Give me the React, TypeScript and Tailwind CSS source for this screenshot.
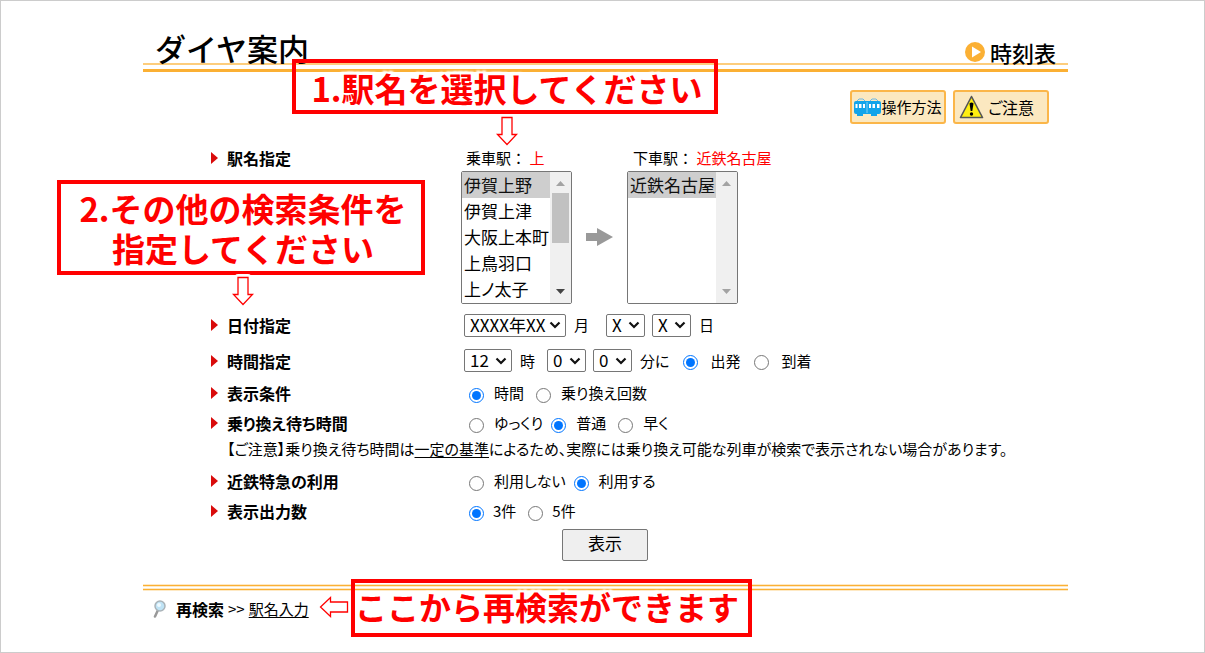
import React, { useState } from 'react';

const stations = ['伊賀上野', '伊賀上津', '大阪上本町', '上鳥羽口', '上ノ太子'];

const callout =
  'absolute whitespace-nowrap border-4 border-[#f00] font-bold text-[#f00] [font-feature-settings:normal] [text-shadow:0_0_2px_#fff,2px_0_1px_#fff,-2px_0_1px_#fff,0_2px_1px_#fff,0_-2px_1px_#fff,3px_3px_2px_#fff,-3px_-3px_2px_#fff,3px_-3px_2px_#fff,-3px_3px_2px_#fff]';

const Dropdown = ({ label, value, width }: { label: string; value: string; width: string }) => (
  <span className={`inline-grid items-center ${width}`}>
    <select
      aria-label={label}
      className="col-start-1 row-start-1 h-[23px] w-full appearance-none rounded-[2px] border border-[#767676] bg-white pb-[2px] pl-[5px] text-[17px] leading-5"
    >
      <option>{value}</option>
    </select>
    <svg viewBox="0 0 12 8" className="pointer-events-none col-start-1 row-start-1 mr-[5px] h-2 w-3 justify-self-end">
      <path d="M1.5 1.5L6 6L10.5 1.5" fill="none" stroke="#111" strokeWidth="2.2" />
    </svg>
  </span>
);

type Option = { text: string; gap: string };

const RadioGroup = ({ name, options, initial }: { name: string; options: Option[]; initial: string }) => {
  const [value, setValue] = useState(initial);
  return (
    <>
      {options.map((o) => (
        <label key={o.text} className={`flex items-center ${o.gap}`}>
          <input
            type="radio"
            name={name}
            checked={value === o.text}
            onChange={() => setValue(o.text)}
            className="mt-1 h-[15px] w-[15px] accent-[#0075ff]"
          />
          {o.text}
        </label>
      ))}
    </>
  );
};

const Heading = ({ title }: { title: string }) => (
  <h2 className="flex w-[254px] shrink-0 items-center gap-[9px] text-[16px] font-bold leading-5">
    <svg viewBox="0 0 8 12" className="h-3 w-2">
      <path d="M1 0L8 6L1 12Z" fill="#d90b0b" />
    </svg>
    {title}
  </h2>
);

const Row = ({ title, height, children }: { title: string; height: string; children: React.ReactNode }) => (
  <div className={`flex items-center ${height}`}>
    <Heading title={title} />
    <div className="flex items-center">{children}</div>
  </div>
);

const ListBox = ({ label, items, active }: { label: string; items: string[]; active: boolean }) => (
  <div className="flex h-[133px] w-[111px] overflow-hidden rounded-[2px] border border-[#767676]">
    <select
      size={5}
      aria-label={label}
      defaultValue={items[0]}
      className="h-full w-[88px] overflow-hidden bg-white p-0 text-[17px] [scrollbar-width:none]"
    >
      {items.map((s) => (
        <option key={s} value={s} className="h-[26px] p-0 pl-[2px] leading-[22px] checked:bg-[#cecece]">
          {s}
        </option>
      ))}
    </select>
    <div aria-hidden="true" className="flex flex-1 flex-col items-center bg-[#f0f0f0] py-[9px]">
      <svg viewBox="0 0 9 5" className="h-[5px] w-[9px]">
        <path d="M0 5L4.500 0L9 5Z" fill="#a3a3a3" />
      </svg>
      <div className={active ? 'mt-[7px] h-[50px] w-[17px] bg-[#c1c1c1]' : ''} />
      <svg viewBox="0 0 9 5" className="mt-auto h-[5px] w-[9px]">
        <path d="M0 0L4.500 5L9 0Z" fill={active ? '#444' : '#a3a3a3'} />
      </svg>
    </div>
  </div>
);

const Arrow = ({ className }: { className: string }) => (
  <svg viewBox="0 0 22 30" className={`absolute h-[30px] w-[22px] overflow-visible ${className}`}>
    <path
      d="M6 1.500H16V18.500H20.500L11 28.500L1.500 18.500H6Z"
      fill="#fff"
      stroke="#fff"
      strokeWidth="7"
      strokeLinejoin="round"
    />
    <path d="M6 1.500H16V18.500H20.500L11 28.500L1.500 18.500H6Z" fill="#fff" stroke="#f00" strokeWidth="1.300" />
  </svg>
);

const TrainIcon = () => (
  <svg viewBox="0 0 27 19" className="h-[19px] w-[27px]">
    <path d="M3 3L5 1H9L11 3M16 3L18 1H22L24 3" fill="none" stroke="#6cb8e6" strokeWidth="1" />
    <rect x="0" y="3" width="27" height="13" rx="2" fill="#12a4ea" />
    <path d="M1.500 6h2v4h-2zM5 6h2.500v4H5zM9 6h2v4H9zM15 6h2v4h-2zM18.500 6H21v4h-2.500zM23 6h2.500v4H23z" fill="#fff" />
    <path d="M13 4V15" stroke="#7fd0f7" strokeWidth="1" />
    <path d="M3 16h6v2H3zM17 16h6v2h-6z" fill="#12a4ea" />
  </svg>
);

const WarningIcon = () => (
  <svg viewBox="0 0 25 24" className="h-6 w-[25px]">
    <path d="M12.500 1.500L23.500 22.500H1.500Z" fill="#ffee10" stroke="#555" strokeWidth="1.600" strokeLinejoin="round" />
    <path d="M10.500 8.500Q12.500 6.500 14.500 8.500L13.300 16H11.700Z" fill="#000" />
    <circle cx="12.500" cy="19" r="1.700" fill="#000" />
  </svg>
);

const App = () => {
  return (
    <div className="relative min-h-screen border border-[#ccc] bg-white pl-[142px] pr-[136px] font-['Noto_Sans_CJK_JP',sans-serif] text-[15px] leading-5 text-black [font-feature-settings:'palt']">
      <header className="flex h-[62px] items-end justify-between px-3">
        <h1 className="text-[31px] font-medium leading-[30px] [font-feature-settings:normal]">ダイヤ案内</h1>
        <a href="#timetable" className="flex items-center gap-1 text-[22px] font-medium leading-5 [font-feature-settings:normal]">
          <svg viewBox="0 0 22 22" className="h-[22px] w-[22px]">
            <circle cx="11" cy="11" r="10" fill="#fbb034" />
            <path d="M8 5.500L17 11L8 16.500Z" fill="#fff" />
          </svg>
          時刻表
        </a>
      </header>
      <div className="h-[9px] border-b-[3px] border-t-2 border-b-[#fbb034] border-t-[#fdcd7c]" />

      <div className="mt-[18px] flex justify-end gap-[7px] pr-[19px]">
        <button className="flex h-[34px] w-24 items-center justify-center rounded-[3px] border-2 border-[#fbb649] bg-[#fbe8c0] text-[15px]">
          <TrainIcon />
          操作方法
        </button>
        <button className="flex h-[34px] w-24 items-center gap-1 rounded-[3px] border-2 border-[#fbb649] bg-[#fbe8c0] pl-1 text-[16px]">
          <WarningIcon />
          ご注意
        </button>
      </div>

      <form className="pl-[67px]" onSubmit={(e) => e.preventDefault()}>
        <div className="flex items-start pt-6">
          <Heading title="駅名指定" />
          <div className="-ml-[3px] flex">
            <div>
              <p className="mb-[3px] pl-[5px] [font-feature-settings:normal]">
                乗車駅： <span className="text-[#f00]">上</span>
              </p>
              <ListBox label="乗車駅" items={stations} active />
            </div>
            <svg viewBox="0 0 27 18" className="mx-[14px] mt-20 h-[18px] w-[27px]">
              <path d="M0 5H11V0L27 9L11 18V13H0Z" fill="#999" />
            </svg>
            <div>
              <p className="mb-[3px] pl-[6px] [font-feature-settings:normal]">
                下車駅： <span className="text-[#f00]">近鉄名古屋</span>
              </p>
              <ListBox label="下車駅" items={['近鉄名古屋']} active={false} />
            </div>
          </div>
        </div>

        <Row title="日付指定" height="h-[42px]">
          <Dropdown label="年月" value="XXXX年XX" width="w-[102px]" />
          <span className="ml-2 mr-[17px]">月</span>
          <Dropdown label="日の十の位" value="X" width="w-[39px]" />
          <span className="w-[7px]" />
          <Dropdown label="日の一の位" value="X" width="w-[39px]" />
          <span className="ml-2">日</span>
        </Row>
        <Row title="時間指定" height="h-[29px]">
          <Dropdown label="時" value="12" width="w-12" />
          <span className="ml-2 mr-3">時</span>
          <Dropdown label="分の十の位" value="0" width="w-[39px]" />
          <span className="w-[7px]" />
          <Dropdown label="分の一の位" value="0" width="w-[39px]" />
          <span className="ml-2 mr-[14px]">分に</span>
          <RadioGroup
            name="type"
            initial="出発"
            options={[{ text: '出発', gap: 'gap-3 mr-[14px]' }, { text: '到着', gap: 'gap-3' }]}
          />
        </Row>
        <Row title="表示条件" height="h-9">
          <span className="w-[5px]" />
          <RadioGroup
            name="order"
            initial="時間"
            options={[{ text: '時間', gap: 'gap-[10px] mr-3' }, { text: '乗り換え回数', gap: 'gap-[10px]' }]}
          />
        </Row>
        <Row title="乗り換え待ち時間" height="h-6">
          <span className="w-[5px]" />
          <RadioGroup
            name="wait"
            initial="普通"
            options={[
              { text: 'ゆっくり', gap: 'gap-[10px] mr-2' },
              { text: '普通', gap: 'gap-[10px] mr-3' },
              { text: '早く', gap: 'gap-[10px]' },
            ]}
          />
        </Row>
        <p className="my-1 whitespace-nowrap pl-[17px]">
          【ご注意】乗り換え待ち時間は
          <a href="#standard" className="underline underline-offset-2">一定の基準</a>
          によるため、実際には乗り換え可能な列車が検索で表示されない場合があります。
        </p>
        <Row title="近鉄特急の利用" height="h-9">
          <span className="w-[5px]" />
          <RadioGroup
            name="express"
            initial="利用する"
            options={[{ text: '利用しない', gap: 'gap-[10px] mr-2' }, { text: '利用する', gap: 'gap-[10px]' }]}
          />
        </Row>
        <Row title="表示出力数" height="h-6">
          <span className="w-[5px]" />
          <RadioGroup
            name="count"
            initial="3件"
            options={[{ text: '3件', gap: 'gap-[9px] mr-3' }, { text: '5件', gap: 'gap-[9px]' }]}
          />
        </Row>
        <button
          type="submit"
          className="ml-[352px] mt-[6px] block h-8 w-[86px] rounded-[2px] border border-[#767676] bg-[#efefef] pb-1 text-[17px]"
        >
          表示
        </button>
      </form>

      <footer className="mt-[23px]">
        <div className="h-[3px] border-y border-[#fee9c4] bg-[#fbb034]" />
        <div className="mt-px h-[3px] border-y border-[#fee9c4] bg-[#fbb034]" />
        <div className="mt-2 flex items-center pl-[9px]">
          <svg viewBox="0 0 14 18" className="mr-[10px] h-[18px] w-[14px]">
            <path d="M6 10L3 16.500" stroke="#999" strokeWidth="2.500" strokeLinecap="round" />
            <circle cx="8" cy="6" r="5" fill="#bfe3f5" stroke="#aab3b8" strokeWidth="1.500" />
            <circle cx="7" cy="5" r="2" fill="#eefaff" />
          </svg>
          <span className="text-[16px] font-bold">再検索</span>
          <span className="mx-1">&gt;&gt;</span>
          <a href="#station" className="underline underline-offset-2">駅名入力</a>
        </div>
      </footer>

      {/* Instruction callouts */}
      <p className={`${callout} left-[291px] top-[58px] h-[55px] w-[426px] pl-1 text-center text-[33px] leading-[51px]`}>
        1.駅名を選択してください
      </p>
      <Arrow className="left-[495px] top-[115px]" />
      <p className={`${callout} left-[56px] top-[179px] h-[95px] w-[368px] pl-1 pt-1 text-center text-[33px] leading-10`}>
        2.その他の検索条件を
        <br />
        指定してください
      </p>
      <Arrow className="left-[231px] top-[275px]" />
      <p className={`${callout} left-[350px] top-[578px] h-[58px] w-[401px] text-[32px] leading-[46px]`}>
        ここから再検索ができます
      </p>
      <Arrow className="left-[322px] top-[591px] rotate-90" />
    </div>
  );
};

export default App;
